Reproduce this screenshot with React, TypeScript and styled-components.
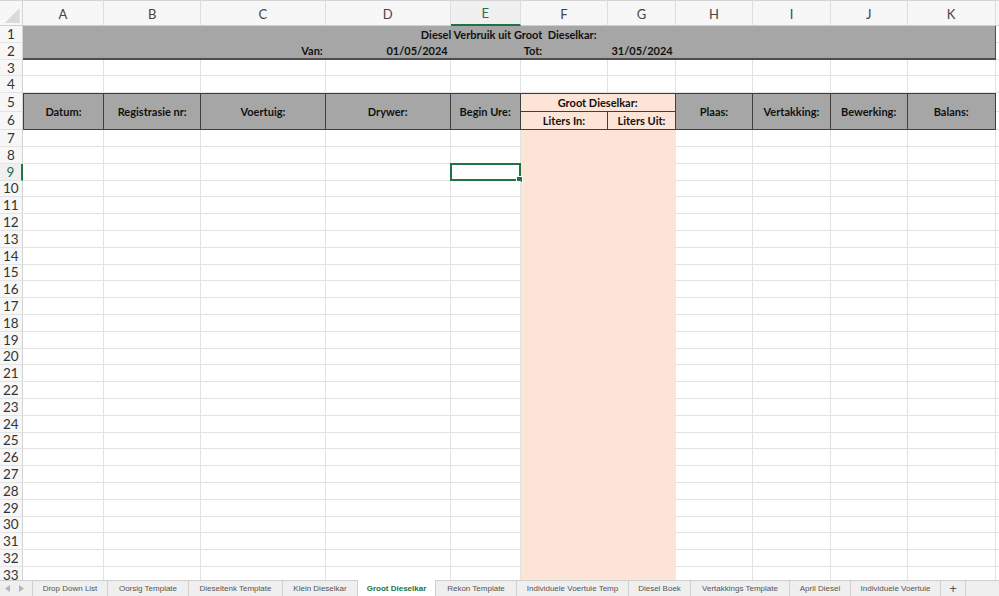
import React from 'react';
import styled, { createGlobalStyle, css } from 'styled-components';

const GlobalStyle = createGlobalStyle`
  html, body { margin: 0; padding: 0; background: #fff; overflow: hidden; }
  #root { width: 999px; height: 596px; }
`;

const CELL_FONT = `Lato, "Liberation Sans", Arial, sans-serif`;
const UI_FONT = `"Liberation Sans", Arial, Helvetica, sans-serif`;

const GREEN = '#217346';
const GRID = '#e2e2e2';
const DARK = '#3f3f3f';
const GRAY = '#a6a6a6';
const PEACH = '#fce4d6';

const COLS = [
  { id: 'A', w: 81.5 },
  { id: 'B', w: 97 },
  { id: 'C', w: 124.5 },
  { id: 'D', w: 125 },
  { id: 'E', w: 70 },
  { id: 'F', w: 87.6 },
  { id: 'G', w: 67.4 },
  { id: 'H', w: 77.6 },
  { id: 'I', w: 77.4 },
  { id: 'J', w: 77 },
  { id: 'K', w: 88 },
];

const COL_TEMPLATE = `22.7px ${COLS.map((c) => `${c.w}px`).join(' ')} 1fr`;
const ROW_TEMPLATE = `26px repeat(4, 16.8px) 18.5px 18.5px repeat(27, 16.8px)`;

const ROW_COUNT = 33;
const SELECTED = { col: 'E', row: 9 };

type Kind = 'plain' | 'title' | 'head' | 'peachHead' | 'peach' | 'tail';

const Page = styled.div`
  width: 999px;
  height: 596px;
  display: flex;
  flex-direction: column;
  overflow: hidden;
  background: #fff;
`;

const Sheet = styled.div`
  flex: 0 0 580px;
  display: grid;
  grid-template-columns: ${COL_TEMPLATE};
  grid-template-rows: ${ROW_TEMPLATE};
  overflow: hidden;
`;

const Corner = styled.div`
  grid-column: 1;
  grid-row: 1;
  position: relative;
  background: #f7f7f7;
  border-top: 1px solid #d4d4d4;
  border-right: 1px solid #d4d4d4;
  border-bottom: 1px solid #cfcfcf;
  box-sizing: border-box;
  &::after {
    content: '';
    position: absolute;
    right: 2px;
    bottom: 2px;
    width: 15px;
    height: 15px;
    background: #d9d9d9;
    clip-path: polygon(100% 0, 100% 100%, 0 100%);
  }
`;

const ColHead = styled.div<{ $col: number; $active?: boolean }>`
  grid-column: ${(p) => p.$col};
  grid-row: 1;
  box-sizing: border-box;
  display: flex;
  align-items: center;
  justify-content: center;
  background: #f7f7f7;
  border-top: 1px solid #d4d4d4;
  border-right: 1px solid #dedede;
  border-bottom: 1px solid #cfcfcf;
  font-family: ${CELL_FONT};
  font-size: 13px;
  color: #454545;
  padding-top: 1px;
  ${(p) =>
    p.$active &&
    css`
      color: ${GREEN};
      border-bottom: 2px solid ${GREEN};
      background: #f0f0f0;
    `}
`;

const RowHead = styled.div<{ $row: number; $active?: boolean }>`
  grid-column: 1;
  grid-row: ${(p) => p.$row + 1};
  box-sizing: border-box;
  display: flex;
  align-items: center;
  justify-content: center;
  background: #f7f7f7;
  border-right: 1px solid #d4d4d4;
  border-bottom: 1px solid #e4e4e4;
  font-family: ${CELL_FONT};
  font-size: 13.5px;
  color: #333;
  ${(p) =>
    p.$active &&
    css`
      color: ${GREEN};
      border-right: 2px solid ${GREEN};
      background: #f0f0f0;
    `}
`;

const kindStyles: Record<Kind, ReturnType<typeof css>> = {
  plain: css`
    background: #fff;
    border-right: 1px solid ${GRID};
    border-bottom: 1px solid ${GRID};
  `,
  tail: css`
    background: #fff;
    border-bottom: 1px solid ${GRID};
  `,
  title: css`
    background: ${GRAY};
  `,
  head: css`
    background: ${GRAY};
    border-right: 1px solid ${DARK};
    border-bottom: 1px solid ${DARK};
  `,
  peachHead: css`
    background: ${PEACH};
    border-right: 1px solid ${DARK};
    border-bottom: 1px solid ${DARK};
  `,
  peach: css`
    background: ${PEACH};
  `,
};

const Cell = styled.div<{
  $col: number;
  $row: number;
  $cspan?: number;
  $rspan?: number;
  $kind: Kind;
  $align?: 'left' | 'center' | 'right';
  $top?: boolean;
  $left?: boolean;
  $thickBottom?: boolean;
  $thickRight?: boolean;
}>`
  grid-column: ${(p) => `${p.$col} / span ${p.$cspan ?? 1}`};
  grid-row: ${(p) => `${p.$row + 1} / span ${p.$rspan ?? 1}`};
  position: relative;
  box-sizing: border-box;
  display: flex;
  align-items: center;
  justify-content: ${(p) =>
    p.$align === 'left' ? 'flex-start' : p.$align === 'right' ? 'flex-end' : 'center'};
  padding: 0 3px;
  font-family: ${CELL_FONT};
  font-weight: 700;
  font-size: 11px;
  color: #111;
  white-space: pre;
  overflow: visible;
  ${(p) => kindStyles[p.$kind]}
  ${(p) => p.$top && css`border-top: 1px solid ${DARK};`}
  ${(p) => p.$left && css`border-left: 1px solid ${DARK};`}
  ${(p) => p.$thickBottom && css`border-bottom: 2px solid #4d4d4d;`}
  ${(p) => p.$thickRight && css`border-right: 1px solid #4d4d4d;`}
`;

const Selection = styled.div`
  position: absolute;
  left: -1px;
  top: -1px;
  right: -1px;
  bottom: -1px;
  border: 2px solid ${GREEN};
  pointer-events: none;
`;

const FillHandle = styled.div`
  position: absolute;
  right: -4px;
  bottom: -4px;
  width: 5px;
  height: 5px;
  background: ${GREEN};
  border: 1px solid #fff;
`;

const TabBar = styled.div`
  flex: 0 0 16px;
  display: flex;
  align-items: stretch;
  background: #efefef;
  border-top: 1px solid #cfcfcf;
  box-sizing: border-box;
  font-family: ${UI_FONT};
`;

const NavArrows = styled.div`
  flex: 0 0 33px;
  display: flex;
  align-items: center;
  gap: 9px;
  padding-left: 5px;
  box-sizing: border-box;
  border-right: 1px solid #cfcfcf;
`;

const Tab = styled.div<{ $w: number; $active?: boolean }>`
  flex: 0 0 ${(p) => p.$w}px;
  box-sizing: border-box;
  display: flex;
  align-items: center;
  justify-content: center;
  border-right: 1px solid #cfcfcf;
  font-size: 8px;
  color: #555;
  white-space: nowrap;
  ${(p) =>
    p.$active &&
    css`
      background: #fff;
      color: ${GREEN};
      font-weight: 700;
      margin-top: -1px;
    `}
`;

const AddTab = styled(Tab)`
  font-size: 13px;
  color: #555;
`;

const TABS = [
  { name: 'Drop Down List', w: 75 },
  { name: 'Oorsig Template', w: 81 },
  { name: 'Dieseltenk Template', w: 94 },
  { name: 'Klein Dieselkar', w: 75 },
  { name: 'Groot Dieselkar', w: 78, active: true },
  { name: 'Rekon Template', w: 81 },
  { name: 'Individuele Voertuie Temp', w: 112 },
  { name: 'Diesel Boek', w: 62 },
  { name: 'Vertakkings Template', w: 99 },
  { name: 'April Diesel', w: 61 },
  { name: 'Individuele Voertuie', w: 90 },
];

const colIndex = (id: string) => COLS.findIndex((c) => c.id === id) + 2;
const TAIL_COL = COLS.length + 2;

const ROW2: Record<string, { text: string; align: 'left' | 'right' }> = {
  C: { text: 'Van:', align: 'right' },
  D: { text: '01/05/2024', align: 'right' },
  F: { text: 'Tot:', align: 'left' },
  G: { text: '31/05/2024', align: 'right' },
};

const HEAD_LABELS: Record<string, string> = {
  A: 'Datum:',
  B: 'Registrasie nr:',
  C: 'Voertuig:',
  D: 'Drywer:',
  E: 'Begin Ure:',
  H: 'Plaas:',
  I: 'Vertakking:',
  J: 'Bewerking:',
  K: 'Balans:',
};

function buildCells() {
  const out: React.ReactNode[] = [];

  // Row 1: merged title
  out.push(
    <Cell key="title" $col={2} $row={1} $cspan={COLS.length} $kind="title" $thickRight>
      {'Diesel Verbruik uit Groot  Dieselkar:'}
    </Cell>
  );
  out.push(<Cell key="t1" $col={TAIL_COL} $row={1} $kind="tail" />);

  // Row 2: period
  COLS.forEach((c) => {
    const v = ROW2[c.id];
    out.push(
      <Cell
        key={`r2-${c.id}`}
        $col={colIndex(c.id)}
        $row={2}
        $kind="title"
        $align={v?.align}
        $thickBottom
        $thickRight={c.id === 'K'}
      >
        {v?.text}
      </Cell>
    );
  });
  out.push(<Cell key="t2" $col={TAIL_COL} $row={2} $kind="tail" />);

  // Rows 3-4 empty
  [3, 4].forEach((r) => {
    COLS.forEach((c) =>
      out.push(<Cell key={`r${r}-${c.id}`} $col={colIndex(c.id)} $row={r} $kind="plain" />)
    );
    out.push(<Cell key={`t${r}`} $col={TAIL_COL} $row={r} $kind="tail" />);
  });

  // Rows 5-6 headers
  COLS.forEach((c) => {
    const label = HEAD_LABELS[c.id];
    if (label) {
      out.push(
        <Cell
          key={`h-${c.id}`}
          $col={colIndex(c.id)}
          $row={5}
          $rspan={2}
          $kind="head"
          $top
          $left={c.id === 'A'}
        >
          {label}
        </Cell>
      );
    }
  });
  out.push(
    <Cell key="h-FG" $col={colIndex('F')} $row={5} $cspan={2} $kind="peachHead" $top>
      Groot Dieselkar:
    </Cell>
  );
  out.push(
    <Cell key="h-F6" $col={colIndex('F')} $row={6} $kind="peachHead">
      Liters In:
    </Cell>
  );
  out.push(
    <Cell key="h-G6" $col={colIndex('G')} $row={6} $kind="peachHead">
      Liters Uit:
    </Cell>
  );
  out.push(<Cell key="t5" $col={TAIL_COL} $row={5} $kind="tail" />);
  out.push(<Cell key="t6" $col={TAIL_COL} $row={6} $kind="tail" />);

  // Peach data block F7:G33
  out.push(
    <Cell key="peach" $col={colIndex('F')} $row={7} $cspan={2} $rspan={ROW_COUNT - 6} $kind="peach" />
  );

  for (let r = 7; r <= ROW_COUNT; r++) {
    COLS.forEach((c) => {
      if (c.id === 'F' || c.id === 'G') return;
      const selected = c.id === SELECTED.col && r === SELECTED.row;
      out.push(
        <Cell key={`r${r}-${c.id}`} $col={colIndex(c.id)} $row={r} $kind="plain">
          {selected && (
            <Selection>
              <FillHandle />
            </Selection>
          )}
        </Cell>
      );
    });
    out.push(<Cell key={`t${r}`} $col={TAIL_COL} $row={r} $kind="tail" />);
  }
  return out;
}

const Arrow = ({ dir }: { dir: 'left' | 'right' }) => (
  <svg width="5" height="7" viewBox="0 0 5 7">
    <polygon points={dir === 'left' ? '5,0 5,7 0,3.5' : '0,0 0,7 5,3.5'} fill="#b5b5b5" />
  </svg>
);

export default function App() {
  return (
    <>
      <GlobalStyle />
      <Page>
        <Sheet>
          <Corner />
          {COLS.map((c, i) => (
            <ColHead key={c.id} $col={i + 2} $active={c.id === SELECTED.col}>
              {c.id}
            </ColHead>
          ))}
          <ColHead $col={TAIL_COL} />
          {Array.from({ length: ROW_COUNT }, (_, i) => (
            <RowHead key={i} $row={i + 1} $active={i + 1 === SELECTED.row}>
              {i + 1}
            </RowHead>
          ))}
          {buildCells()}
        </Sheet>
        <TabBar>
          <NavArrows>
            <Arrow dir="left" />
            <Arrow dir="right" />
          </NavArrows>
          {TABS.map((t) => (
            <Tab key={t.name} $w={t.w} $active={t.active}>
              {t.name}
            </Tab>
          ))}
          <AddTab $w={25}>+</AddTab>
        </TabBar>
      </Page>
    </>
  );
}
